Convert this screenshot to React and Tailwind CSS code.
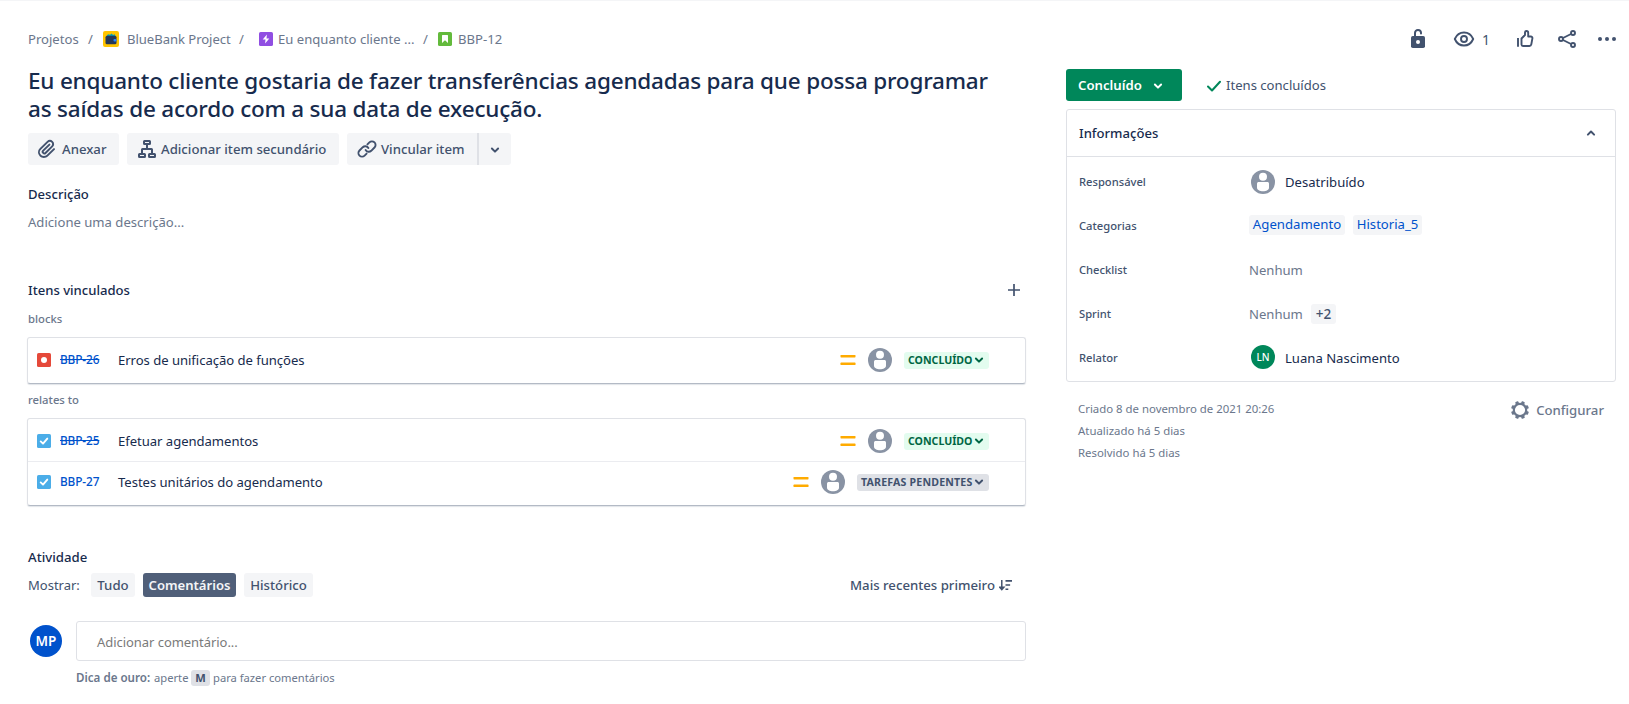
const SANS = "font-['Noto_Sans','Open_Sans',sans-serif]";

function Svg({ className, box = 24, children }) {
  return (
    <svg viewBox={`0 0 ${box} ${box}`} className={`shrink-0 block ${className}`} fill="none">
      {children}
    </svg>
  );
}

function Chevron({ className, up = false }) {
  return (
    <Svg box={10} className={className}>
      <path
        d={up ? 'M1.9 6.6 5 3.5l3.1 3.1' : 'M1.9 3.5 5 6.6l3.1-3.1'}
        stroke="currentColor"
        strokeWidth="2"
        strokeLinecap="round"
        strokeLinejoin="round"
      />
    </Svg>
  );
}

function PersonAvatar() {
  return (
    <Svg className="size-6">
      <circle cx="12" cy="12" r="12" fill="#8993a4" />
      <circle cx="12" cy="6.800" r="4" fill="#fff" />
      <path d="M6 13.700c0-1 .8-1.700 1.700-1.700h8.600c1 0 1.700.7 1.700 1.700v4c0 2.200-2.700 3.500-6 3.500s-6-1.300-6-3.500z" fill="#fff" />
    </Svg>
  );
}

function TypeIcon({ type }) {
  const fill = { bug: '#e5493a', task: '#4bade8', epic: '#904ee2', story: '#63ba3c' }[type];
  return (
    <Svg box={14} className="size-3.5">
      <rect width="14" height="14" rx="1.6" fill={fill} />
      {type === 'bug' && <circle cx="7" cy="7" r="3" fill="#fff" />}
      {type === 'task' && (
        <path d="M3.7 7.400 6 9.600l4.300-5" stroke="#fff" strokeWidth="1.900" strokeLinecap="round" strokeLinejoin="round" />
      )}
      {type === 'epic' && <path d="M7.900 2.600 3.700 7.600h2.800L6.100 11.400l4.200-5H7.500z" fill="#fff" />}
      {type === 'story' && <path d="M4 3.600c0-.4.300-.6.600-.6h4.800c.4 0 .6.200.6.600V11L7 8.200 4 11z" fill="#fff" />}
    </Svg>
  );
}

function Slash({ className }) {
  return <span className={className}>/</span>;
}

function Breadcrumbs() {
  return (
    <nav className="flex h-5 items-center text-[13.1px] leading-5 text-[#6b778c]">
      <span className="w-[60px]">Projetos</span>
      <Slash className="w-[15px]" />
      <Svg box={16} className="size-4">
        <rect width="16" height="16" rx="2" fill="#ffc400" />
        <path d="M3.500 5 5 3.200l2 .6 1.800-1.300L10 4l1.800-.8.900 2.300H3.500z" fill="#00a3bf" />
        <rect x="2.500" y="4.800" width="11" height="8.500" rx="1.500" fill="#253858" />
        <rect x="10.500" y="8" width="3" height="2.500" rx="1" fill="#2684ff" />
      </Svg>
      <span className="ml-2 w-[112px] tracking-[-0.05px]">BlueBank Project</span>
      <Slash className="w-5" />
      <TypeIcon type="epic" />
      <span className="ml-[5px] w-[145px]">Eu enquanto cliente ...</span>
      <Slash className="w-[15px]" />
      <TypeIcon type="story" />
      <span className="ml-[6px]">BBP-12</span>
    </nav>
  );
}

function PaperclipIcon() {
  return (
    <Svg className="size-6">
      <path
        d="M11.643 17.965c-1.53 1.495-4.016 1.496-5.542.004a3.773 3.773 0 0 1 .002-5.412l7.147-6.985a2.316 2.316 0 0 1 3.233-.003c.893.873.895 2.282.004 3.153l-6.703 6.55a.653.653 0 0 1-.914-.008.62.62 0 0 1 0-.902l6.229-6.087a.941.941 0 0 0 0-1.353.995.995 0 0 0-1.384 0l-6.23 6.087a2.502 2.502 0 0 0 0 3.607 2.643 2.643 0 0 0 3.683.009l6.703-6.55a4.074 4.074 0 0 0-.003-5.859 4.306 4.306 0 0 0-6.002.003l-7.148 6.985a5.655 5.655 0 0 0-.001 8.118c2.29 2.239 6.015 2.238 8.31-.005l6.686-6.533a.941.941 0 0 0 0-1.353.995.995 0 0 0-1.384 0l-6.686 6.534z"
        fill="currentColor"
      />
    </Svg>
  );
}

function TreeIcon() {
  return (
    <Svg className="size-6">
      <g stroke="currentColor" strokeWidth="2" strokeLinejoin="round">
        <rect x="9" y="4" width="6" height="3" rx=".5" />
        <rect x="4" y="17" width="6" height="3" rx=".5" />
        <rect x="14" y="17" width="6" height="3" rx=".5" />
        <path d="M12 7.500V12M7 17v-4.500c0-.3.200-.5.500-.5h9c.3 0 .5.200.5.500V17" />
      </g>
    </Svg>
  );
}

function LinkIcon() {
  return (
    <Svg className="size-6">
      <g stroke="currentColor" strokeWidth="1.900" strokeLinecap="round" strokeLinejoin="round">
        <path d="m12.400 7.400 2-2a3.600 3.600 0 0 1 5.100 5.100l-3.300 3.300a3.600 3.600 0 0 1-5.600-.8" />
        <path d="m11.600 16.600-2 2a3.600 3.600 0 0 1-5.100-5.100l3.300-3.300a3.600 3.600 0 0 1 5.600.8" />
      </g>
    </Svg>
  );
}

function Toolbar() {
  return (
    <div className="flex gap-2 text-[13.2px] font-medium text-[#42526e]">
      <button className="flex h-8 w-[91px] items-center rounded-[3px] bg-[#f4f5f7] pl-[7px]">
        <PaperclipIcon />
        <span className="ml-[3px] pt-[2px]">Anexar</span>
      </button>
      <button className="flex h-8 w-[212px] items-center rounded-[3px] bg-[#f4f5f7] pl-2">
        <TreeIcon />
        <span className="ml-[2px] whitespace-nowrap pt-[2px]">Adicionar item secundário</span>
      </button>
      <div className="flex">
        <button className="flex h-8 w-[130px] items-center rounded-l-[3px] bg-[#f4f5f7] pl-2">
          <LinkIcon />
          <span className="ml-[2px] whitespace-nowrap pt-[2px]">Vincular item</span>
        </button>
        <button className="flex h-8 w-[34px] items-center justify-center rounded-r-[3px] border-l-2 border-[#dfe1e6] bg-[#f4f5f7] pt-px">
          <Chevron className="size-[10px]" />
        </button>
      </div>
    </div>
  );
}

const STATUS = {
  done: { label: 'CONCLUÍDO', cls: 'w-[85px] bg-[#e3fcef] text-[#006644]' },
  todo: { label: 'TAREFAS PENDENTES', cls: 'w-[132px] bg-[#dfe1e6] text-[#42526e] tracking-[0.18px]' },
};

function LinkedItem({ type, id, title, status, closed, className }) {
  const s = STATUS[status];
  return (
    <div className={`flex items-center pl-[9px] pr-9 ${className}`}>
      <TypeIcon type={type} />
      <span className={`ml-[9px] w-[58px] text-[11.800px] font-medium tracking-[-0.1px] text-[#0052cc] ${closed ? 'line-through' : ''}`}>
        {id}
      </span>
      <span className="flex-1 text-[13.1px] leading-5 tracking-[-0.04px] text-[#172b4d]">{title}</span>
      <Svg box={16} className="size-4">
        <rect x=".5" y="3" width="15" height="2.400" rx=".6" fill="#ffab00" />
        <rect x=".5" y="10.600" width="15" height="2.400" rx=".6" fill="#ffab00" />
      </Svg>
      <span className="ml-3 mr-3">
        <PersonAvatar />
      </span>
      <span className={`flex h-[17px] items-center justify-between rounded-[3px] pl-1 pr-[5px] text-[10.600px] font-bold ${s.cls}`}>
        <span className="whitespace-nowrap leading-[17px]">{s.label}</span>
        <Chevron className="size-[10px]" />
      </span>
    </div>
  );
}

const CARD =
  'ml-[-1px] w-[999px] rounded-[3px] border border-[#dfe1e6] border-b-[#b3bac5] shadow-[0_1px_1px_rgba(9,30,66,0.12)]';

function LinkedItems() {
  return (
    <section>
      <div className="flex h-5 items-center justify-between pr-[6px]">
        <h2 className="text-[13.1px] font-medium leading-5 text-[#172b4d]">Itens vinculados</h2>
        <Svg box={12} className="size-3">
          <path d="M6 0v12M0 6h12" stroke="#42526e" strokeWidth="1.700" />
        </Svg>
      </div>
      <h3 className="mt-[9px] text-[11.300px] font-medium leading-5 text-[#6b778c]">blocks</h3>
      <div className={`mt-2 h-[47px] ${CARD}`}>
        <LinkedItem className="h-[44px]" type="bug" id="BBP-26" title="Erros de unificação de funções" status="done" closed />
      </div>
      <h3 className="mt-[6px] text-[11.300px] font-medium leading-5 text-[#6b778c]">relates to</h3>
      <div className={`mt-2 h-[88px] ${CARD}`}>
        <LinkedItem className="h-[43px] border-b border-[#ebecf0] pt-[2px]" type="task" id="BBP-25" title="Efetuar agendamentos" status="done" closed />
        <LinkedItem className="h-10" type="task" id="BBP-27" title="Testes unitários do agendamento" status="todo" />
      </div>
    </section>
  );
}

function Activity() {
  return (
    <section>
      <h2 className="text-[13.2px] font-medium leading-5 text-[#172b4d]">Atividade</h2>
      <div className="mt-[6px] flex h-6 items-center text-[13.2px] font-medium text-[#42526e]">
        <span className="w-[63px] pt-px text-[13px] font-normal">Mostrar:</span>
        <button className="h-6 w-11 rounded-[3px] bg-[#f4f5f7] pt-px">Tudo</button>
        <button className="ml-2 h-6 w-[93px] rounded-[3px] bg-[#505f79] pt-px text-[13.1px] font-semibold text-[#f4f5f7]">Comentários</button>
        <button className="ml-2 h-6 w-[69px] rounded-[3px] bg-[#f4f5f7] pt-px">Histórico</button>
        <span className="ml-auto whitespace-nowrap pt-px">Mais recentes primeiro</span>
        <Svg box={14} className="ml-[4px] mr-[14px] size-[13px]">
          <path d="M3 1v10M.8 9 3 11.400 5.200 9z" stroke="currentColor" strokeWidth="1.600" />
          <path d="M7 2h7M7 6.500h5M7 11h3" stroke="currentColor" strokeWidth="1.800" />
        </Svg>
      </div>
      <div className="mt-6 flex">
        <div className="ml-[2px] mt-1 flex size-8 items-center justify-center rounded-full bg-[#0052cc] text-[13.5px] font-semibold text-white">
          MP
        </div>
        <div className="ml-[14px]">
          <div className="flex h-10 w-[950px] items-center rounded-[3px] border border-[#dfe1e6] pl-5 pt-[3px] text-[13px] tracking-[-0.05px] text-[#7a7a7a]">
            Adicionar comentário...
          </div>
          <div className="mt-[7px] flex h-5 items-center text-[11.200px] leading-5 text-[#6b778c]">
            <span className="w-[78px] whitespace-nowrap text-[11.600px] font-semibold">Dica de ouro:</span>
            <span className="w-[37px]">aperte</span>
            <span className="h-4 w-[19px] rounded-[3px] bg-[#dfe1e6] text-center font-bold leading-4 text-[#42526e]">M</span>
            <span className="ml-[3px]">para fazer comentários</span>
          </div>
        </div>
      </div>
    </section>
  );
}

function ActionIcons() {
  return (
    <div className="flex h-6 items-center text-[#42526e]">
      <Svg className="size-6">
        <rect x="5" y="9" width="14" height="12" rx="1.800" fill="currentColor" />
        <path d="M9 10V6a3 3 0 0 1 6-.2v.8" stroke="currentColor" strokeWidth="2" strokeLinecap="round" />
        <circle cx="12" cy="15" r="2" fill="#fff" />
      </Svg>
      <Svg className="ml-[22px] size-6">
        <path d="M12 5.500c4.300 0 7.500 2.600 9.200 6.500-1.700 3.900-4.900 6.500-9.200 6.500S4.500 15.900 2.800 12C4.500 8.100 7.700 5.500 12 5.500z" stroke="currentColor" strokeWidth="1.900" strokeLinejoin="round" />
        <circle cx="12" cy="12" r="3" stroke="currentColor" strokeWidth="1.900" />
      </Svg>
      <span className="ml-[6px] w-[9px] text-[14px]">1</span>
      <Svg className="ml-[22px] size-6">
        <path d="M5 11v8.800" stroke="currentColor" strokeWidth="1.900" />
        <path d="M8.500 11.500 12 8V5.500c0-1 .7-1.500 1.500-1.500 1 0 1.700.8 1.700 1.800V9.500h2.600c1.100 0 1.800.9 1.600 1.900l-1.100 6c-.2 1-.9 1.600-1.900 1.600H10c-.9 0-1.500-.6-1.500-1.500z" stroke="currentColor" strokeWidth="1.900" strokeLinejoin="round" />
      </Svg>
      <Svg className="ml-[18px] size-6">
        <g stroke="currentColor" strokeWidth="1.900">
          <circle cx="6" cy="12" r="2" />
          <circle cx="18" cy="6" r="2" />
          <circle cx="18" cy="18" r="2" />
          <path d="m8 11 8-4M8 13l8 4" />
        </g>
      </Svg>
      <Svg className="ml-4 size-6">
        <g fill="currentColor">
          <circle cx="5" cy="12" r="2" />
          <circle cx="12" cy="12" r="2" />
          <circle cx="19" cy="12" r="2" />
        </g>
      </Svg>
    </div>
  );
}

function Field({ label, children, className = '' }) {
  return (
    <div className={`flex h-11 items-center ${className}`}>
      <span className="w-[170px] text-[11.200px] font-medium leading-5 text-[#42526e]">{label}</span>
      <div className="flex items-center text-[13.1px] leading-5">{children}</div>
    </div>
  );
}

function Details() {
  return (
    <div className="h-[273px] w-[550px] rounded-[3px] border border-[#dfe1e6]">
      <div className="flex h-[47px] items-center justify-between border-b border-[#dfe1e6] pl-3 pr-[19px]">
        <h2 className="text-[13.1px] font-medium leading-5 text-[#172b4d]">Informações</h2>
        <Chevron up className="size-[10px] text-[#42526e]" />
      </div>
      <div className="pl-3 pt-[3px]">
        <Field label="Responsável">
          <span className="ml-[2px] mr-[10px]">
            <PersonAvatar />
          </span>
          <span className="text-[#172b4d]">Desatribuído</span>
        </Field>
        <Field label="Categorias">
          <span className="mb-[3px] h-5 w-24 rounded-[3px] bg-[#f4f5f7] text-center text-[13.2px] leading-[19px] text-[#0052cc]">Agendamento</span>
          <span className="mb-[3px] ml-2 h-5 w-[69px] rounded-[3px] bg-[#f4f5f7] text-center leading-[19px] text-[#0052cc]">Historia_5</span>
        </Field>
        <Field label="Checklist">
          <span className="text-[#6b778c]">Nenhum</span>
        </Field>
        <Field label="Sprint">
          <span className="w-[62px] text-[#6b778c]">Nenhum</span>
          <span className="mb-px h-5 w-[25px] rounded-[3px] bg-[#f4f5f7] text-center text-[13.600px] font-medium text-[#42526e]">+2</span>
        </Field>
        <Field label="Relator">
          <span className="mb-[2px] ml-[2px] mr-[10px] flex size-6 items-center justify-center rounded-full bg-[#00875a] text-[10px] font-medium text-white">
            LN
          </span>
          <span className="text-[#172b4d]">Luana Nascimento</span>
        </Field>
      </div>
    </div>
  );
}

function GearIcon() {
  const teeth = [22.5, 67.5, 112.5, 157.5, 202.5, 247.5, 292.5, 337.5];
  return (
    <Svg className="size-6">
      <circle cx="12" cy="12" r="6.200" stroke="currentColor" strokeWidth="2.200" />
      {teeth.map((a) => (
        <rect key={a} x="10.300" y="3" width="3.400" height="3" rx=".8" fill="currentColor" transform={`rotate(${a} 12 12)`} />
      ))}
    </Svg>
  );
}

export default function App() {
  return (
    <main className={`flex h-[704px] w-[1629px] overflow-hidden border-t border-[#f4f5f7] bg-white ${SANS}`}>
      <div className="w-[1066px] pl-7 pt-7">
        <Breadcrumbs />
        <div className="w-[998px]">
          <h1 className="mt-[18px] whitespace-nowrap text-[22.500px] font-medium leading-7 tracking-[-0.2px] text-[#172b4d]">
            Eu enquanto cliente gostaria de fazer transferências agendadas para que possa programar
            <br />
            as saídas de acordo com a sua data de execução.
          </h1>
          <div className="mt-[10px]">
            <Toolbar />
          </div>
          <h2 className="mt-[19px] text-[13.1px] font-medium leading-5 text-[#172b4d]">Descrição</h2>
          <p className="mt-2 text-[13.1px] leading-5 text-[#6b778c]">Adicione uma descrição...</p>
          <div className="mt-12">
            <LinkedItems />
          </div>
          <div className="mt-[41px]">
            <Activity />
          </div>
        </div>
      </div>
      <aside className="w-[550px] pt-[26px]">
        <div className="-mr-[3px] flex justify-end">
          <ActionIcons />
        </div>
        <div className="mt-[18px] flex h-8 items-center">
          <button className="flex h-8 w-[116px] items-center rounded-[3px] bg-[#00875a] pl-3 pt-px text-[13.2px] font-semibold text-white">
            <span className="w-[75px] pt-px text-left">Concluído</span>
            <Chevron className="size-[10px]" />
          </button>
          <Svg box={14} className="ml-[25px] mt-px size-3.5">
            <path d="m1 7.500 4 4L13 2.800" stroke="#00875a" strokeWidth="2" strokeLinecap="round" strokeLinejoin="round" />
          </Svg>
          <span className="ml-[5px] pt-[2px] text-[13.1px] text-[#42526e]">Itens concluídos</span>
        </div>
        <div className="mt-2">
          <Details />
        </div>
        <div className="flex justify-between pl-3 pr-3 pt-4 text-[#6b778c]">
          <div className="text-[11.400px] leading-[22px]">
            <p>Criado 8 de novembro de 2021 20:26</p>
            <p>Atualizado há 5 dias</p>
            <p>Resolvido há 5 dias</p>
          </div>
          <button className="flex h-6 items-center text-[13.2px] font-medium">
            <GearIcon />
            <span className="ml-1 pt-px">Configurar</span>
          </button>
        </div>
      </aside>
    </main>
  );
}
